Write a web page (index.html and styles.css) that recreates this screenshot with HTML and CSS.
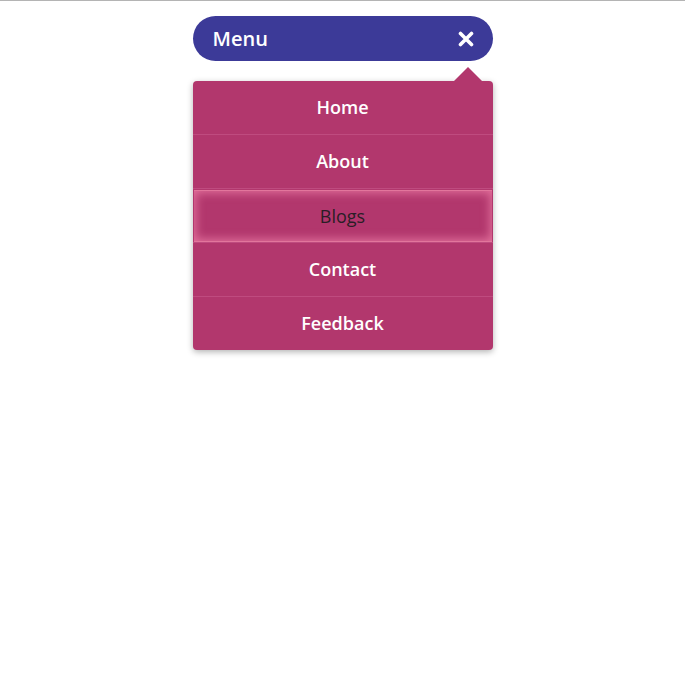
FILE: index.html
```html
<!DOCTYPE html>
<html lang="en">
<head>
<meta charset="utf-8">
<title>Menu</title>
<link rel="stylesheet" href="styles.css">
</head>
<body>
<div class="page">
  <nav class="nav">
    <button class="menu-btn" type="button">
      <span class="menu-label">Menu</span>
      <svg class="close-icon" width="16" height="16" viewBox="0 0 16 16" aria-hidden="true">
        <path d="M2.5 2.5 L13.5 13.5 M13.5 2.5 L2.5 13.5" stroke="#fff" stroke-width="3.6" stroke-linecap="round"/>
      </svg>
    </button>
    <ul class="dropdown">
      <li class="item"><a href="#">Home</a></li>
      <li class="item"><a href="#">About</a></li>
      <li class="item active"><a href="#">Blogs</a></li>
      <li class="item"><a href="#">Contact</a></li>
      <li class="item"><a href="#">Feedback</a></li>
    </ul>
  </nav>
</div>
</body>
</html>
```

FILE: styles.css
```css
html, body {
  margin: 0;
  padding: 0;
  background: #fff;
}
body {
  font-family: "Open Sans", "Noto Sans", sans-serif;
}
.page {
  border-top: 1px solid #b4b4b4;
  min-height: 695px;
}
.nav {
  width: 300px;
  margin: 15px auto 0;
}
.menu-btn {
  display: flex;
  align-items: center;
  justify-content: space-between;
  width: 100%;
  height: 45px;
  padding: 0 19px 0 20px;
  border: none;
  border-radius: 23px;
  background: #3c3a98;
  color: #fff;
  font-family: inherit;
  font-size: 20px;
  font-weight: 600;
  box-sizing: border-box;
}
.menu-label {
  line-height: 1;
  margin-top: 0;
}
.close-icon {
  display: block;
}
.dropdown {
  position: relative;
  list-style: none;
  margin: 20px 0 0;
  padding: 0;
  background: #b2376d;
  border-radius: 4px;
  box-shadow: 0 2px 6px rgba(0, 0, 0, 0.3);
}
.dropdown::before {
  content: "";
  position: absolute;
  top: -14px;
  right: 11px;
  border-left: 14px solid transparent;
  border-right: 14px solid transparent;
  border-bottom: 14px solid #b2376d;
}
.item {
  border-bottom: 1px solid #bf4b7f;
}
.item:last-child {
  border-bottom: none;
}
.item a {
  display: flex;
  align-items: center;
  justify-content: center;
  height: 53px;
  padding-bottom: 1px;
  box-sizing: border-box;
  color: #fff;
  text-decoration: none;
  font-size: 18px;
  font-weight: 600;
}
.item.active a {
  margin: 1px 1px 0;
  height: 52px;
  box-sizing: border-box;
  border-top: 1px solid #e2769c;
  border-bottom: 1px solid #e2769c;
  box-shadow: inset 0 0 10px 2px rgba(240, 130, 170, 0.75);
  color: #2a1e26;
  font-weight: 400;
}
```
